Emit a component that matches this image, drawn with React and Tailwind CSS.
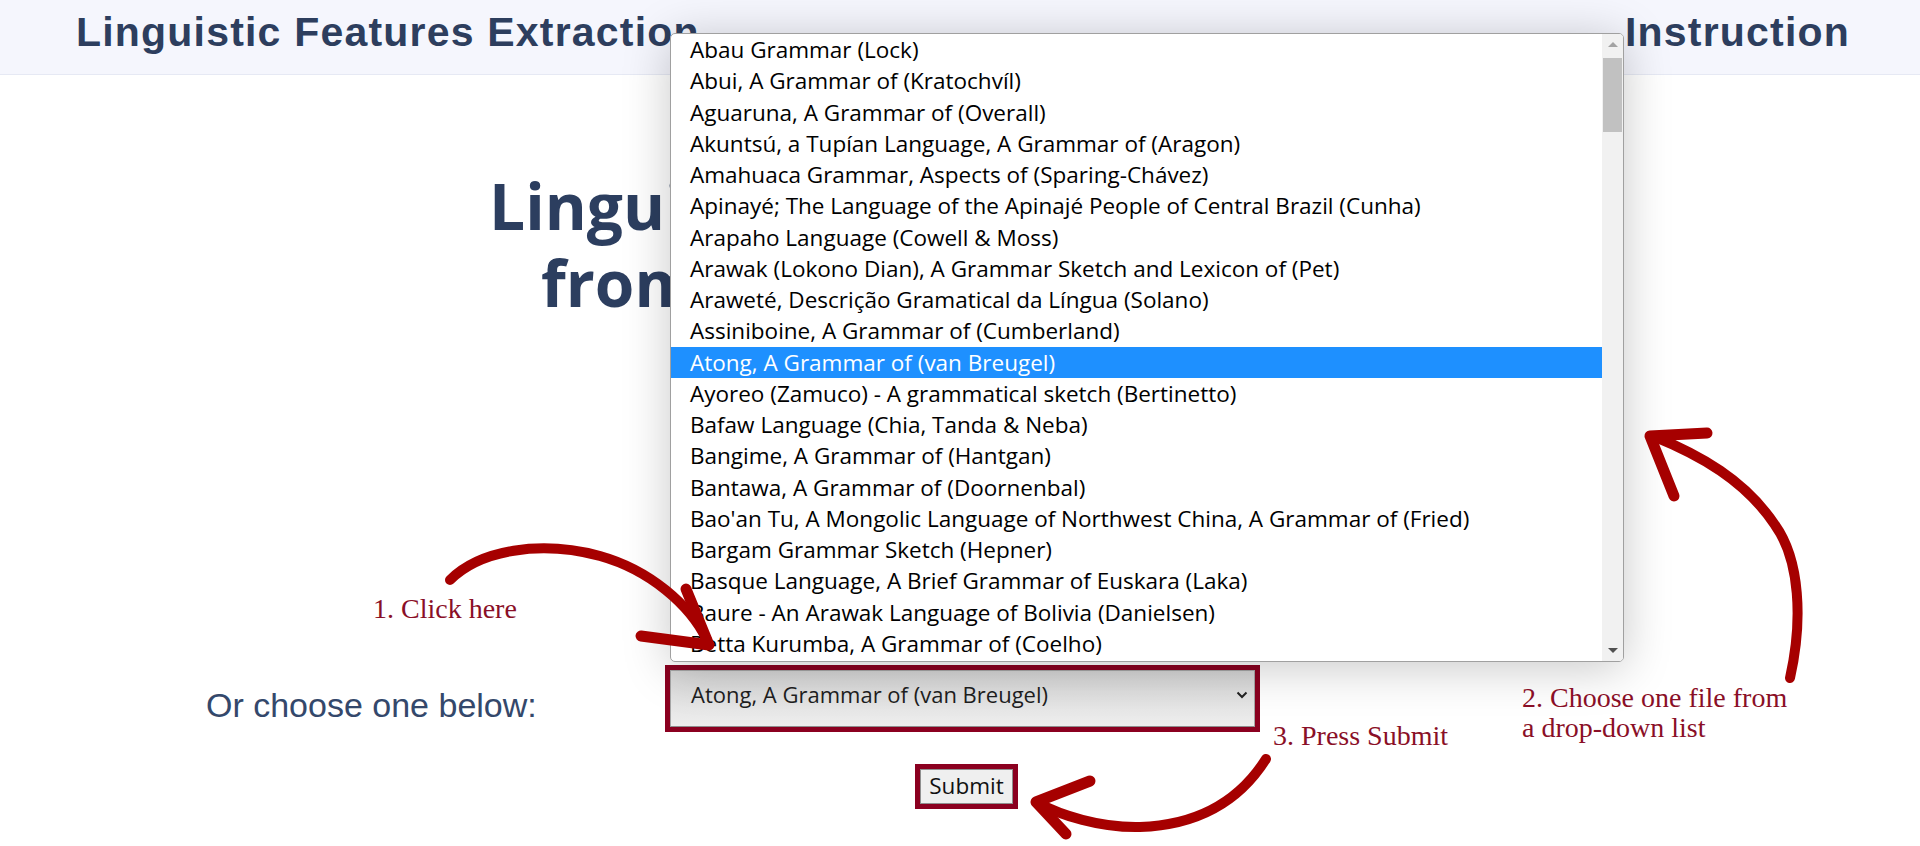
const books = [
  "Abau Grammar (Lock)",
  "Abui, A Grammar of (Kratochvíl)",
  "Aguaruna, A Grammar of (Overall)",
  "Akuntsú, a Tupían Language, A Grammar of (Aragon)",
  "Amahuaca Grammar, Aspects of (Sparing-Chávez)",
  "Apinayé; The Language of the Apinajé People of Central Brazil (Cunha)",
  "Arapaho Language (Cowell & Moss)",
  "Arawak (Lokono Dian), A Grammar Sketch and Lexicon of (Pet)",
  "Araweté, Descrição Gramatical da Língua (Solano)",
  "Assiniboine, A Grammar of (Cumberland)",
  "Atong, A Grammar of (van Breugel)",
  "Ayoreo (Zamuco) - A grammatical sketch (Bertinetto)",
  "Bafaw Language (Chia, Tanda & Neba)",
  "Bangime, A Grammar of (Hantgan)",
  "Bantawa, A Grammar of (Doornenbal)",
  "Bao'an Tu, A Mongolic Language of Northwest China, A Grammar of (Fried)",
  "Bargam Grammar Sketch (Hepner)",
  "Basque Language, A Brief Grammar of Euskara (Laka)",
  "Baure - An Arawak Language of Bolivia (Danielsen)",
  "Betta Kurumba, A Grammar of (Coelho)",
];

const selected = 10;

export default function App() {
  return (
    <div className="relative min-h-screen w-full overflow-hidden bg-white font-['Open_Sans',sans-serif]">
      {/* Top bar */}
      <header className="flex h-[75px] items-start justify-between border-b border-[#e6e9f4] bg-[#f5f6fd] pl-[76px] pr-[70px] pt-[9px] font-['Liberation_Sans',Arial,sans-serif] text-[41px] font-bold leading-[47px] tracking-[1.2px] text-[#2d3e5e]">
        <div>Linguistic Features Extraction</div>
        <div>Instruction</div>
      </header>

      <main>
        <h1 className="mt-[92px] whitespace-nowrap pl-[489px] text-[64px] font-bold leading-[77px] text-[#2c3e5f]">
          Linguistic Features Extraction
          <br />
          <span className="pl-[52px]">from Grammar Books</span>
        </h1>

        {/* Choose from list */}
        <div className="mt-[344px] flex pl-[206px]">
          <label className="mt-[21px] w-[459px] font-['Liberation_Sans',Arial,sans-serif] text-[34px] leading-[39px] text-[#34486b]">
            Or choose one below:
          </label>
          <div className="h-[67px] w-[595px] border-[5px] border-[#8b0020]">
            <div className="flex h-full items-center justify-between border border-[#a6a6a6] border-b-[#8e8e8e] bg-linear-to-b from-[#d6d6d6] to-[#eeeeee] pb-[8px] pl-[20px] pr-[6px] text-[22px] text-[#1e1e1e]">
              <span>Atong, A Grammar of (van Breugel)</span>
              <svg width="12" height="8" viewBox="0 0 12 8" fill="none">
                <path d="M1.5 1.5 L6 6 L10.5 1.5" stroke="#222" strokeWidth="2" />
              </svg>
            </div>
          </div>
        </div>

        {/* Submit */}
        <div className="mt-[32px] flex justify-center pl-[13px]">
          <div className="border-[5px] border-[#8b0020]">
            <button className="h-[35px] border border-[#8f8f8f] bg-[#efefef] px-[8px] text-[22.5px] leading-none text-[#111]">
              Submit
            </button>
          </div>
        </div>
      </main>

      {/* Opened dropdown list */}
      <div className="absolute left-[670px] top-[33px] flex h-[629px] w-[954px] overflow-hidden rounded-[5px] border border-[#a0a0a0] bg-white shadow-[0_6px_48px_rgba(0,0,0,0.22)]">
        <ul className="flex-1 text-[22.5px] text-black">
          {books.map((b, i) => (
            <li
              key={b}
              className={
                i === selected
                  ? "h-[31.25px] whitespace-nowrap bg-[#1e90ff] pl-[19px] leading-[31.25px] text-white"
                  : "h-[31.25px] whitespace-nowrap pl-[19px] leading-[31.25px]"
              }
            >
              {b}
            </li>
          ))}
        </ul>
        <div className="flex w-[21px] flex-col bg-[#f1f1f1]">
          <div className="flex h-[21px] items-center justify-center">
            <div className="h-0 w-0 border-x-[5px] border-b-[5px] border-x-transparent border-b-[#a3a3a3]" />
          </div>
          <div className="mx-[1px] mt-[3px] h-[74px] bg-[#c1c1c1]" />
          <div className="flex-1" />
          <div className="flex h-[21px] items-center justify-center">
            <div className="h-0 w-0 border-x-[5px] border-t-[5px] border-x-transparent border-t-[#505050]" />
          </div>
        </div>
      </div>

      {/* Annotations */}
      <div className="pointer-events-none absolute left-[373px] top-[595px] font-['Liberation_Serif','Times_New_Roman',serif] text-[28px] leading-none text-[#8a0f27]">
        1. Click here
      </div>
      <div className="pointer-events-none absolute left-[1522px] top-[683px] font-['Liberation_Serif','Times_New_Roman',serif] text-[28px] leading-[30px] text-[#8a0f27]">
        2. Choose one file from
        <br />
        a drop-down list
      </div>
      <div className="pointer-events-none absolute left-[1273px] top-[722px] font-['Liberation_Serif','Times_New_Roman',serif] text-[28px] leading-none text-[#8a0f27]">
        3. Press Submit
      </div>

      <svg
        className="pointer-events-none absolute left-0 top-0"
        width="1920"
        height="846"
        viewBox="0 0 1920 846"
        fill="none"
        stroke="#a60000"
        strokeLinecap="round"
        strokeLinejoin="round"
      >
        <path d="M450 580 C480 550 540 540 600 556 C650 570 690 605 707 640" strokeWidth="10" />
        <path d="M686 589 L709 645 L641 636" strokeWidth="11" />

        <path d="M1790 678 C1803 620 1800 560 1775 525 C1745 480 1700 455 1653 436" strokeWidth="10" />
        <path d="M1707 433 L1650 436 L1674 496" strokeWidth="11" />

        <path d="M1266 759 C1240 800 1200 825 1140 827 C1100 828 1060 815 1038 803" strokeWidth="10" />
        <path d="M1090 781 L1036 802 L1066 834" strokeWidth="11" />
      </svg>
    </div>
  );
}
